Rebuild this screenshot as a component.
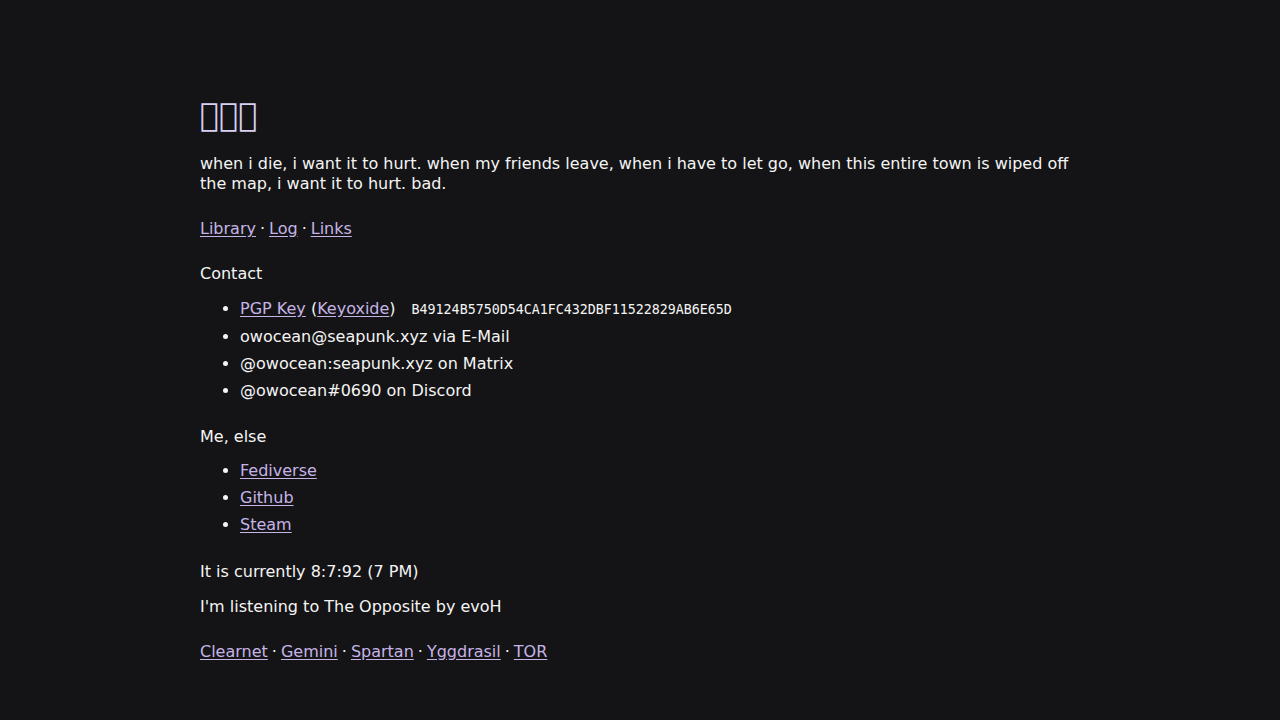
const links = "text-[#c6b4e6] underline underline-offset-2";

function Dot() {
  return <span className="mx-[4px]">·</span>;
}

export default function App() {
  return (
    <div className="min-h-[720px] w-full bg-[#141416] text-[#f4f4f4] font-['DejaVu_Sans',sans-serif] text-[16px]">
      <div className="pl-[200px] pt-[97px] w-[1080px]">
        <h1 className="text-[32px] leading-[36px] text-[#d9d0f2]">{"\uE000\uE001\uE002"}</h1>

        <p className="mt-[21px] leading-[20px]">
          when i die, i want it to hurt. when my friends leave, when i have to let go, when this entire town is wiped off the map, i want it to hurt. bad.
        </p>

        <nav className="mt-[25px] leading-[20px]">
          <a href="#" className={links}>Library</a>
          <Dot />
          <a href="#" className={links}>Log</a>
          <Dot />
          <a href="#" className={links}>Links</a>
        </nav>

        <h2 className="mt-[24px] leading-[22px]">Contact</h2>
        <ul className="mt-[10px] list-disc pl-[40px] leading-[27px]">
          <li>
            <a href="#" className={links}>PGP Key</a> (<a href="#" className={links}>Keyoxide</a>)
            <code className="ml-[16px] font-['DejaVu_Sans_Mono',monospace] text-[13.3px]">B49124B5750D54CA1FC432DBF11522829AB6E65D</code>
          </li>
          <li>owocean@seapunk.xyz via E-Mail</li>
          <li>@owocean:seapunk.xyz on Matrix</li>
          <li>@owocean#0690 on Discord</li>
        </ul>

        <h2 className="mt-[22px] leading-[22px]">Me, else</h2>
        <ul className="mt-[9px] list-disc pl-[40px] leading-[27px]">
          <li><a href="#" className={links}>Fediverse</a></li>
          <li><a href="#" className={links}>Github</a></li>
          <li><a href="#" className={links}>Steam</a></li>
        </ul>

        <p className="mt-[24px] leading-[20px]">It is currently 8:7:92 (7 PM)</p>
        <p className="mt-[15px] leading-[20px]">I'm listening to The Opposite by evoH</p>

        <footer className="mt-[25px] leading-[20px]">
          <a href="#" className={links}>Clearnet</a>
          <Dot />
          <a href="#" className={links}>Gemini</a>
          <Dot />
          <a href="#" className={links}>Spartan</a>
          <Dot />
          <a href="#" className={links}>Yggdrasil</a>
          <Dot />
          <a href="#" className={links}>TOR</a>
        </footer>
      </div>
    </div>
  );
}
